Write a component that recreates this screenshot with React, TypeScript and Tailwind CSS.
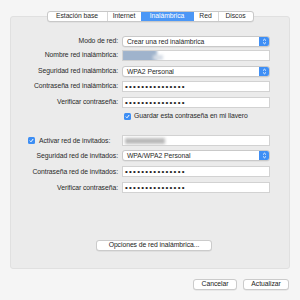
import type { ReactNode } from 'react'

const tabs = [
  { label: 'Estación base', w: 'w-[59px]' },
  { label: 'Internet', w: 'w-[34px]' },
  { label: 'Inalámbrica', w: 'w-[53px]', active: true },
  { label: 'Red', w: 'w-[24px]' },
  { label: 'Discos', w: 'w-[35px]' },
]

function Popup({ value }: { value: string }) {
  return (
    <div className="flex h-[11px] w-[148px] items-stretch rounded-[3px] border border-[#c9c9c9] bg-white shadow-[0_0.5px_0_rgba(0,0,0,0.08)]">
      <span className="flex-1 pl-[4px] leading-[9px]">{value}</span>
      <span className="flex w-[10px] flex-col items-center justify-center rounded-r-[2px] bg-[#3f8ff5]">
        <svg width="5" height="7" viewBox="0 0 5 7" fill="none" stroke="white" strokeWidth="0.9">
          <path d="M1 2.6 L2.5 1.2 L4 2.6" />
          <path d="M1 4.4 L2.5 5.8 L4 4.4" />
        </svg>
      </span>
    </div>
  )
}

function Field({ children }: { children?: ReactNode }) {
  return (
    <div className="relative h-[11px] w-[148px] overflow-hidden border border-[#d2d2d2] bg-white">
      {children}
    </div>
  )
}

function Dots() {
  return (
    <Field>
      <span className="absolute left-[2px] top-[-1px] text-[8px] leading-[11px] tracking-[1.25px] text-[#222]">
        •••••••••••••••
      </span>
    </Field>
  )
}

function Check() {
  return (
    <span className="flex h-[7px] w-[7px] shrink-0 items-center justify-center rounded-[1.5px] bg-[#3d8ef4]">
      <svg width="5" height="5" viewBox="0 0 5 5" fill="none" stroke="white" strokeWidth="1">
        <path d="M0.8 2.6 L2 3.8 L4.2 1" />
      </svg>
    </span>
  )
}

function Row({ label, mt, children }: { label: ReactNode; mt: string; children: ReactNode }) {
  return (
    <div className={`grid grid-cols-[107px_148px] items-center gap-x-[4px] ${mt}`}>
      <div className="flex justify-end whitespace-nowrap">{label}</div>
      {children}
    </div>
  )
}

function Btn({ children, w }: { children: ReactNode; w: string }) {
  return (
    <button className={`flex h-[11px] ${w} items-center justify-center rounded-[3px] border border-[#cbcbcb] bg-white leading-none text-[#222] shadow-[0_0.5px_0_rgba(0,0,0,0.1)]`}>
      {children}
    </button>
  )
}

export default function App() {
  return (
    <div className="h-[300px] w-[300px] overflow-hidden bg-[#f5f5f5] font-['Liberation_Sans',Arial,sans-serif] text-[6.8px] tracking-[-0.05px] text-[#2a2a2a]">
      {/* Tabs */}
      <div className="relative z-10 flex justify-center pt-[11px]">
        <div className="flex h-[11px] overflow-hidden rounded-[3px] border border-[#c8c8c8] bg-white shadow-[0_0.5px_0_rgba(0,0,0,0.08)]">
          {tabs.map((t, i) => (
            <div
              key={t.label}
              className={`flex items-center justify-center leading-none ${t.w} ${
                t.active ? 'bg-[#4b97f6] text-white' : i > 0 && !tabs[i - 1].active ? 'border-l border-[#d6d6d6]' : ''
              }`}
            >
              {t.label}
            </div>
          ))}
        </div>
      </div>

      {/* Panel */}
      <div className="mx-[10px] -mt-[6px] h-[253px] rounded-[3px] border border-[#e0e0e0] bg-[#ebebeb] pt-[19px]">
        <Row label="Modo de red:" mt="mt-0">
          <Popup value="Crear una red inalámbrica" />
        </Row>
        <Row label="Nombre red inalámbrica:" mt="mt-[3px]">
          <Field>
            <div className="absolute left-[-2px] top-[-2px] h-[14px] w-[36px] bg-[#9fb3cc] blur-[1.5px]" />
            <div className="absolute left-[30px] top-[4px] h-[5px] w-[10px] bg-[#d6dde6] blur-[1.5px]" />
          </Field>
        </Row>
        <Row label="Seguridad red inalámbrica:" mt="mt-[5px]">
          <Popup value="WPA2 Personal" />
        </Row>
        <Row label="Contraseña red inalámbrica:" mt="mt-[4px]">
          <Dots />
        </Row>
        <Row label="Verificar contraseña:" mt="mt-[5px]">
          <Dots />
        </Row>
        <Row label="" mt="mt-[3px]">
          <div className="flex items-center gap-[3px] pl-[2px]">
            <Check />
            <span className="whitespace-nowrap">Guardar esta contraseña en mi llavero</span>
          </div>
        </Row>

        <Row
          label={
            <span className="flex w-full items-center gap-[4px] pl-[17px]">
              <Check />
              <span>Activar red de invitados:</span>
            </span>
          }
          mt="mt-[14px]"
        >
          <Field>
            <div className="absolute left-[2px] top-[2px] h-[6px] w-[40px] bg-[#b9b9b9] blur-[1.5px]" />
          </Field>
        </Row>
        <Row label="Seguridad red de invitados:" mt="mt-[4px]">
          <Popup value="WPA/WPA2 Personal" />
        </Row>
        <Row label="Contraseña red de invitados:" mt="mt-[5px]">
          <Dots />
        </Row>
        <Row label="Verificar contraseña:" mt="mt-[5px]">
          <Dots />
        </Row>

        <div className="mt-[47px] flex pl-[85px]">
          <Btn w="w-[116px]">Opciones de red inalámbrica...</Btn>
        </div>
      </div>

      {/* Footer buttons */}
      <div className="mt-[10px] flex justify-end gap-[6px] pr-[11px]">
        <Btn w="w-[44px]">Cancelar</Btn>
        <Btn w="w-[46px]">Actualizar</Btn>
      </div>
    </div>
  )
}
